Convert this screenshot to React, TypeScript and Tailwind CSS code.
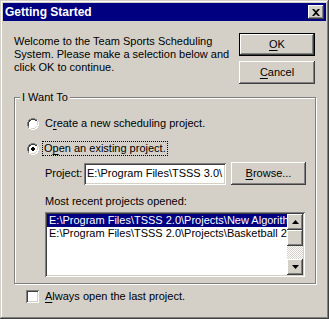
import React, { useState } from 'react';

// Classic Win2k-style "Getting Started" dialog

const raised =
  'shadow-[inset_-1px_-1px_#404040,inset_1px_1px_#ffffff,inset_-2px_-2px_#808080,inset_2px_2px_#d4d0c8]';
const sunken =
  'shadow-[inset_1px_1px_#808080,inset_-1px_-1px_#ffffff,inset_2px_2px_#404040,inset_-2px_-2px_#d4d0c8]';

function Radio({ checked }: { checked: boolean }) {
  return (
    <svg width="12" height="12" viewBox="0 0 12 12" className="shrink-0">
      {/* outer ring */}
      <path d="M4 0h4v1h2v1h1v2h1v4h-1v2h-1v1h-2v1h-4v-1h-2v-1h-1v-2h-1v-4h1v-2h1v-1h2z" fill="#ffffff" />
      <path d="M4 0h4v1h2v1h-2v-1h-4v1h-2v2h-1v4h1v2h-1v-2h-1v-4h1v-2h1v-1h2z" fill="#808080" />
      <path d="M4 1h4v1h2v1h-2v-1h-4v1h-1v1h-1v4h-1v-4h1v-2h2z" fill="#404040" />
      <path d="M10 3h1v4h-1v2h-1v1h-1v1h-4v-1h4v-1h1v-2h1z" fill="#d4d0c8" />
      <path d="M4 2h4v1h1v1h1v4h-1v1h-1v1h-4v-1h-1v-1h-1v-4h1v-1h1z" fill="#ffffff" />
      {checked && <path d="M5 4h2v1h1v2h-1v1h-2v-1h-1v-2h1z" fill="#000000" />}
    </svg>
  );
}

function Arrow({ down }: { down?: boolean }) {
  return (
    <svg width="7" height="4" viewBox="0 0 7 4">
      <path d={down ? 'M0 0h7l-3.5 4z' : 'M0 4h7l-3.5-4z'} fill="#000000" />
    </svg>
  );
}

export default function App() {
  const [choice, setChoice] = useState<'new' | 'open'>('open');
  const [always, setAlways] = useState(false);
  const [selected, setSelected] = useState(0);

  const recent = [
    'E:\\Program Files\\TSSS 2.0\\Projects\\New Algorithm',
    'E:\\Program Files\\TSSS 2.0\\Projects\\Basketball 20',
  ];

  return (
    <div
      className="w-[329px] h-[319px] bg-[#d4d0c8] p-[3px] text-[11px] leading-[13px] text-black select-none shadow-[inset_-1px_-1px_#404040,inset_1px_1px_#d4d0c8,inset_-2px_-2px_#808080,inset_2px_2px_#ffffff]"
      style={{ fontFamily: '"Liberation Sans", Arial, sans-serif' }}
    >
      {/* Title bar */}
      <div className="h-[18px] bg-[#000080] flex items-center justify-between pl-[2px] pr-[2px]">
        <span className="text-white font-bold text-[12px]">Getting Started</span>
        <button className={`w-[16px] h-[14px] bg-[#d4d0c8] flex items-center justify-center ${raised}`}>
          <svg width="8" height="7" viewBox="0 0 8 7">
            <path d="M0 0h2l2 2 2-2h2l-3 3.5 3 3.5h-2l-2-2-2 2h-2l3-3.5z" fill="#000000" />
          </svg>
        </button>
      </div>

      {/* Body */}
      <div className="pl-[11px] pr-[10px]">
        <div className="flex justify-between pt-[12px]">
          <p className="w-[224px] pt-[2px]">
            Welcome to the Team Sports Scheduling System. Please make a selection below and click OK to
            continue.
          </p>
          <div className="flex flex-col gap-[5px] mr-[1px]">
            <button className={`w-[76px] h-[23px] bg-[#d4d0c8] border border-black ${raised}`}>
              <span className="underline underline-offset-2">O</span>K
            </button>
            <button className={`w-[76px] h-[23px] bg-[#d4d0c8] ${raised}`}>
              <span className="underline underline-offset-2">C</span>ancel
            </button>
          </div>
        </div>

        {/* Group box */}
        <div className="relative mt-[13px] w-[302px] h-[187px] border border-[#808080] shadow-[inset_1px_1px_#ffffff,1px_1px_#ffffff]">
          <span className="absolute -top-[7px] left-[5px] bg-[#d4d0c8] px-[2px]">I Want To</span>

          <div className="pl-[12px] pt-[19px]">
            <label className="flex items-center gap-[6px] h-[13px]" onClick={() => setChoice('new')}>
              <Radio checked={choice === 'new'} />
              <span>
                C<span className="underline underline-offset-2">r</span>eate a new scheduling project.
              </span>
            </label>

            <label className="flex items-center gap-[4px] mt-[11px] h-[15px]" onClick={() => setChoice('open')}>
              <Radio checked={choice === 'open'} />
              <span className="outline outline-1 outline-dotted outline-black px-[1px] leading-[13px]">
                O<span className="underline underline-offset-2">p</span>en an existing project.
              </span>
            </label>

            <div className="pl-[18px] pt-[6px]">
              <div className="flex items-center">
                <span className="w-[39px]">Project:</span>
                <div className={`w-[142px] h-[22px] bg-white px-[3px] flex items-center overflow-hidden whitespace-nowrap ${sunken}`}>
                  E:\Program Files\TSSS 3.0\
                </div>
                <button className={`ml-[5px] w-[75px] h-[23px] bg-[#d4d0c8] ${raised}`}>
                  <span className="underline underline-offset-2">B</span>rowse...
                </button>
              </div>

              <div className="mt-[10px]">Most recent projects opened:</div>

              <div className={`mt-[4px] w-[260px] h-[65px] bg-white p-[2px] flex ${sunken}`}>
                <div className="flex-1 min-w-0 overflow-hidden">
                  {recent.map((r, i) => (
                    <div
                      key={r}
                      onClick={() => setSelected(i)}
                      className={`h-[13px] pl-[2px] whitespace-nowrap overflow-hidden ${
                        selected === i ? 'bg-[#000080] text-white' : ''
                      }`}
                    >
                      {r}
                    </div>
                  ))}
                </div>
                <div className="w-[16px] flex flex-col">
                  <div className={`h-[16px] bg-[#d4d0c8] flex items-center justify-center ${raised}`}>
                    <Arrow />
                  </div>
                  <div className={`h-[16px] bg-[#d4d0c8] ${raised}`} />
                  <div className="flex-1 bg-[repeating-conic-gradient(#d4d0c8_0%_25%,#ffffff_0%_50%)] bg-[length:2px_2px]" />
                  <div className={`h-[16px] bg-[#d4d0c8] flex items-center justify-center ${raised}`}>
                    <Arrow down />
                  </div>
                </div>
              </div>
            </div>
          </div>
        </div>

        {/* Checkbox */}
        <label className="flex items-center gap-[6px] mt-[6px] ml-[12px]" onClick={() => setAlways(!always)}>
          <span className={`w-[13px] h-[13px] bg-white shrink-0 ${sunken}`}>
            {always && (
              <svg width="13" height="13" viewBox="0 0 13 13">
                <path d="M3 5l2 2 4-4v2l-4 4-2-2z" fill="#000" />
              </svg>
            )}
          </span>
          <span>
            <span className="underline underline-offset-2">A</span>lways open the last project.
          </span>
        </label>
      </div>
    </div>
  );
}
